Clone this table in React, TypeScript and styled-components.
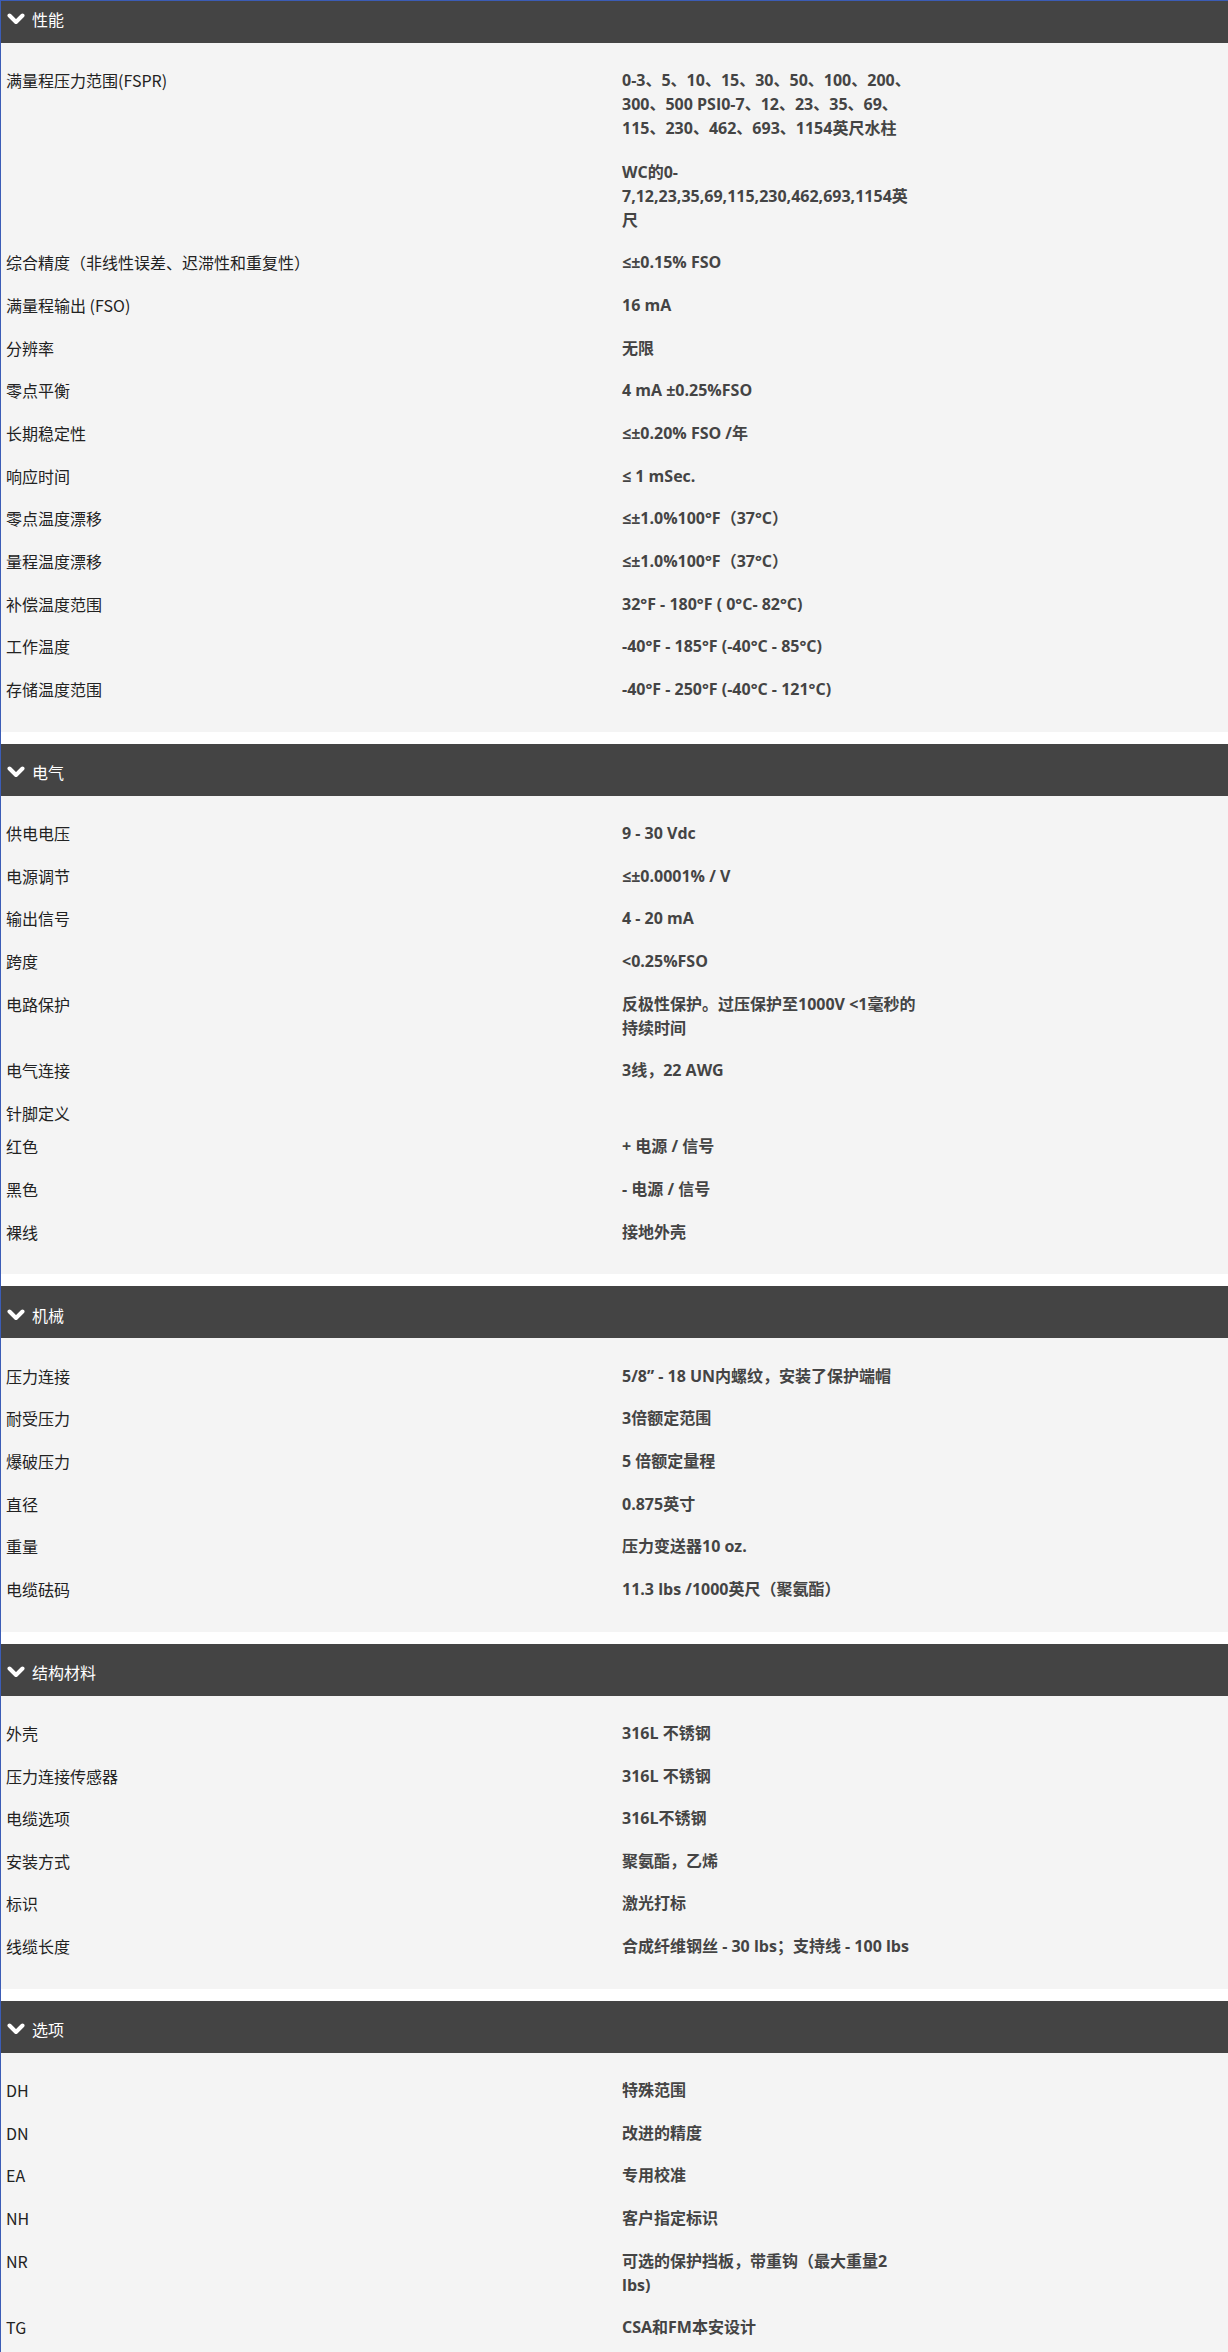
import { createGlobalStyle, styled } from 'styled-components'

const GlobalStyle = createGlobalStyle`
  html, body {
    margin: 0;
    padding: 0;
    background: #fff;
  }
  body {
    font-family: 'Open Sans', 'Noto Sans CJK SC', sans-serif;
    -webkit-font-smoothing: antialiased;
  }
`

type Row = { label: string; value?: string[]; tight?: boolean }
type Section = { title: string; rows: Row[] }

const sections: Section[] = [
  {
    title: '性能',
    rows: [
      {
        label: '满量程压力范围(FSPR)',
        value: [
          '0-3、5、10、15、30、50、100、200、\n300、500 PSI0-7、12、23、35、69、\n115、230、462、693、1154英尺水柱',
          'WC的0-\n7,12,23,35,69,115,230,462,693,1154英\n尺'
        ]
      },
      { label: '综合精度（非线性误差、迟滞性和重复性）', value: ['≤±0.15% FSO'] },
      { label: '满量程输出 (FSO)', value: ['16 mA'] },
      { label: '分辨率', value: ['无限'] },
      { label: '零点平衡', value: ['4 mA ±0.25%FSO'] },
      { label: '长期稳定性', value: ['≤±0.20% FSO /年'] },
      { label: '响应时间', value: ['≤ 1 mSec.'] },
      { label: '零点温度漂移', value: ['≤±1.0%100°F（37°C）'] },
      { label: '量程温度漂移', value: ['≤±1.0%100°F（37°C）'] },
      { label: '补偿温度范围', value: ['32°F - 180°F ( 0°C- 82°C)'] },
      { label: '工作温度', value: ['-40°F - 185°F (-40°C - 85°C)'] },
      { label: '存储温度范围', value: ['-40°F - 250°F (-40°C - 121°C)'] }
    ]
  },
  {
    title: '电气',
    rows: [
      { label: '供电电压', value: ['9 - 30 Vdc'] },
      { label: '电源调节', value: ['≤±0.0001% / V'] },
      { label: '输出信号', value: ['4 - 20 mA'] },
      { label: '跨度', value: ['<0.25%FSO'] },
      { label: '电路保护', value: ['反极性保护。过压保护至1000V <1毫秒的\n持续时间'] },
      { label: '电气连接', value: ['3线，22 AWG'] },
      { label: '针脚定义', tight: true },
      { label: '红色', value: ['+ 电源 / 信号'] },
      { label: '黑色', value: ['- 电源 / 信号'] },
      { label: '裸线', value: ['接地外壳'] }
    ]
  },
  {
    title: '机械',
    rows: [
      { label: '压力连接', value: ['5/8” - 18 UN内螺纹，安装了保护端帽'] },
      { label: '耐受压力', value: ['3倍额定范围'] },
      { label: '爆破压力', value: ['5 倍额定量程'] },
      { label: '直径', value: ['0.875英寸'] },
      { label: '重量', value: ['压力变送器10 oz.'] },
      { label: '电缆砝码', value: ['11.3 lbs /1000英尺（聚氨酯）'] }
    ]
  },
  {
    title: '结构材料',
    rows: [
      { label: '外壳', value: ['316L 不锈钢'] },
      { label: '压力连接传感器', value: ['316L 不锈钢'] },
      { label: '电缆选项', value: ['316L不锈钢'] },
      { label: '安装方式', value: ['聚氨酯，乙烯'] },
      { label: '标识', value: ['激光打标'] },
      { label: '线缆长度', value: ['合成纤维钢丝 - 30 lbs；支持线 - 100 lbs'] }
    ]
  },
  {
    title: '选项',
    rows: [
      { label: 'DH', value: ['特殊范围'] },
      { label: 'DN', value: ['改进的精度'] },
      { label: 'EA', value: ['专用校准'] },
      { label: 'NH', value: ['客户指定标识'] },
      { label: 'NR', value: ['可选的保护挡板，带重钩（最大重量2\nlbs)'] },
      { label: 'TG', value: ['CSA和FM本安设计'] }
    ]
  }
]

const Page = styled.div`
  display: flex;
  flex-direction: column;
  gap: 12px;
  min-height: 2352px;
  box-sizing: border-box;
  border-left: 1px solid #3b5cb6;
  border-top: 1px solid #3b5cb6;
`

const SectionBox = styled.section`
  display: flex;
  flex-direction: column;
`

const Header = styled.div<{ $first?: boolean }>`
  display: flex;
  align-items: center;
  gap: 7px;
  box-sizing: border-box;
  height: ${(p) => (p.$first ? 42 : 52)}px;
  padding: ${(p) => (p.$first ? '0 0 7px 6px' : '5px 0 0 6px')};
  background: #444444;
  color: #fff;
  font-family: 'Noto Sans CJK SC', 'Open Sans', sans-serif;
  font-size: 16px;
  line-height: 24px;
`

const Chevron = styled.svg`
  width: 18px;
  height: 12px;
  flex: none;
`

const Body = styled.div`
  display: flex;
  flex-direction: column;
  padding: 16px 0 21.33px 5px;
  background: #f4f4f4;
`

const RowBox = styled.div<{ $tight?: boolean }>`
  display: grid;
  grid-template-columns: 616px 1fr;
  padding: ${(p) => (p.$tight ? '9.33px 0 0' : '9.33px 0')};
  font-size: 16px;
  line-height: 24px;
`

const Label = styled.div`
  color: #222;
  font-family: 'Noto Sans CJK SC', 'Open Sans', sans-serif;
  font-weight: 400;
`

const Value = styled.div`
  display: flex;
  flex-direction: column;
  gap: 19.5px;
  color: #444;
  font-family: 'Open Sans', 'Noto Sans CJK SC', sans-serif;
  font-weight: 700;
  white-space: pre-line;
`

const ChevronIcon = () => (
  <Chevron viewBox='0 0 18 12'>
    <polyline points='2.5,2.5 9,9 15.5,2.5' fill='none' stroke='#fff' strokeWidth='4' strokeLinecap='round' strokeLinejoin='round' />
  </Chevron>
)

const App = () => {
  return (
    <>
      <GlobalStyle />
      <Page>
        {sections.map((s, i) => (
          <SectionBox key={s.title}>
            <Header $first={i === 0}>
              <ChevronIcon />
              <span>{s.title}</span>
            </Header>
            <Body>
              {s.rows.map((r) => (
                <RowBox key={r.label} $tight={r.tight}>
                  <Label>{r.label}</Label>
                  <Value>
                    {r.value?.map((v, k) => (
                      <span key={k}>{v}</span>
                    ))}
                  </Value>
                </RowBox>
              ))}
            </Body>
          </SectionBox>
        ))}
      </Page>
    </>
  )
}

export default App
